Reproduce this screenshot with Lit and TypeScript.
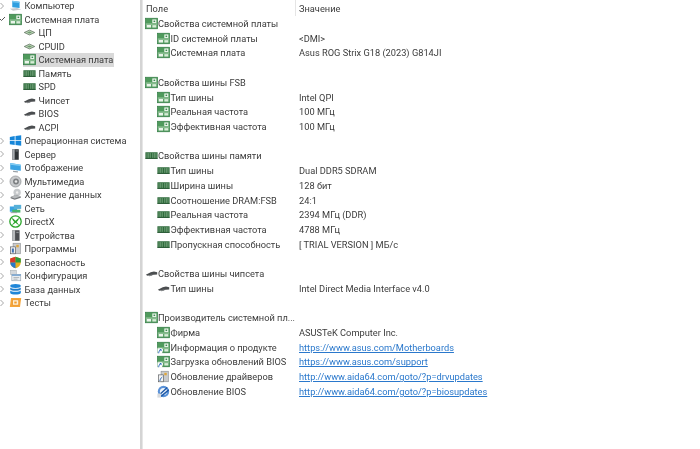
import { LitElement, html, css, svg } from "lit";
import { customElement } from "lit/decorators.js";

const board = svg`<rect x="0.5" y="1.5" width="15" height="13" fill="#4f9a5c"/><rect x="0.5" y="1.5" width="15" height="13" fill="none" stroke="#2f7a42" stroke-width=".8"/><rect x="9" y="3" width="5" height="4.5" fill="#eef5ee"/><rect x="10.5" y="4.4" width="2" height="1.8" fill="#3d8a50"/><rect x="2" y="9.8" width="5.5" height="3.2" fill="#eaf4ea"/><rect x="1" y="8.2" width="14" height="1" fill="#c4e0c4"/><rect x="9" y="10" width="5" height="3" fill="#d8ecd8"/>`;
const mem = svg`<rect x="0.5" y="4" width="15" height="8" fill="#2f6b3c"/><path d="M2.5 5v6M4.5 5v6M6.5 5v6M9.5 5v6M11.5 5v6M13.5 5v6" stroke="#8fb894" stroke-width=".8"/><rect x="0.5" y="11" width="15" height="1" fill="#1f4f2b"/>`;
const chip = svg`<path d="M1 9.5 7 6.4 11 5.6 15 6.4 15 9.2 11 9.5 6 10.2 3 10.7Z" fill="#4b4e50"/><path d="M4 10.2 9 9.2 9 10.8 5 11.3Z" fill="#85888a"/>`;
const cpu = svg`<path d="M1.5 8 8 5 14.5 8 8 11Z" fill="#b9d4b4" stroke="#5f6f60" stroke-width=".9"/><path d="M5 8 8 6.7 11 8 8 9.3Z" fill="#6f9a70"/>`;
const computer = svg`<path d="M4 2 13 3.5 13 11 4 10Z" fill="#2f9fe0"/><path d="M4 2 13 3.5 13 5 4 4Z" fill="#7cc8ef"/><path d="M1 12 10 11 15 13 5 14.5Z" fill="#c4c8cc"/>`;
const windows = svg`<path d="M1 3.6 7 2.6V7.6H1ZM8 2.5 15 1.4V7.6H8ZM1 8.5H7V13.4L1 12.5ZM8 8.5H15V14.6L8 13.5Z" fill="#1686d9"/>`;
const server = svg`<rect x="4" y="1.5" width="8" height="13" fill="#2f3336"/><rect x="4" y="1.5" width="3" height="13" fill="#a9adb1"/><rect x="8" y="3" width="3" height="1.2" fill="#7d8286"/>`;
const display = svg`<path d="M1.5 2.5 14.5 4.5V12L1.5 10.5Z" fill="#3aa3e3"/><path d="M1.5 2.5 14.5 4.5V6L1.5 4.5Z" fill="#83ccf2"/><path d="M5 12 11 12.5 11 14 5 13.5Z" fill="#9aa0a5"/>`;
const media = svg`<circle cx="8" cy="8" r="6.8" fill="#c9cbcd"/><circle cx="8" cy="8" r="6.8" fill="none" stroke="#84878a" stroke-width=".8"/><circle cx="8.6" cy="8" r="3.6" fill="#7c7f82"/><circle cx="8.6" cy="8" r="1.6" fill="#e8e8e8"/>`;
const storage = svg`<ellipse cx="10" cy="5.5" rx="4.5" ry="4.5" fill="#c6c9cb"/><circle cx="10" cy="5.5" r="1.5" fill="#eee"/><path d="M2 11 8 8.6 14.5 10.5 14.5 12 7 14.5 2 12.5Z" fill="#75787b"/><path d="M2 11 8 8.6 14.5 10.5 7 13Z" fill="#b7babc"/>`;
const net = svg`<rect x="1" y="5.5" width="9" height="6.5" fill="#3aa3e3"/><rect x="6" y="3.5" width="9" height="5" fill="#58b0d8"/><rect x="4" y="9.5" width="10" height="3.5" fill="#47b56a"/><rect x="2" y="12.5" width="8" height="1.2" fill="#9aa0a5"/>`;
const directx = svg`<circle cx="8" cy="8" r="7" fill="#fff" stroke="#2aa52a" stroke-width="1.6"/><path d="M4 3.6C6 5 7 6.2 8 7.2 9 6.2 10 5 12 3.6 13 4.4 11 7 9.4 8.6 11 10.2 12.4 12 12.2 12.8 10.6 11.6 9 10.4 8 9.6 7 10.4 5.4 11.6 3.8 12.8 3.6 12 5 10.2 6.6 8.6 5 7 3 4.4 4 3.6Z" fill="#2aa52a"/>`;
const devices = svg`<rect x="4" y="1.5" width="9" height="13" fill="#4a4d50"/><rect x="4" y="1.5" width="3.5" height="13" fill="#b7babc"/><rect x="9" y="3.5" width="3" height="1.5" fill="#8b8f92"/>`;
const programs = svg`<rect x="5" y="1.5" width="9" height="13" fill="#c9cbcd" stroke="#85888b" stroke-width=".7"/><rect x="2" y="6" width="6" height="8.5" fill="#f0f0f0" stroke="#55585b" stroke-width=".8"/><rect x="3.5" y="8" width="2.5" height="5" fill="#3f6fb0"/><rect x="9" y="3.5" width="3" height="3" fill="#e0a63a"/>`;
const shield = svg`<path d="M8 .8 14.5 3V8C14.5 11.5 11.5 14 8 15.2 4.5 14 1.5 11.5 1.5 8V3Z" fill="#e8b020"/><path d="M8 .8V8H1.5V3Z" fill="#d8392b"/><path d="M8 .8 14.5 3V8H8Z" fill="#2f9a3f"/><path d="M1.5 8H8V15.2C4.5 14 1.5 11.5 1.5 8Z" fill="#2a78c8"/>`;
const config = svg`<rect x="2" y="1.5" width="7" height="5" fill="#d4d8dc" stroke="#9ea4a8" stroke-width=".6"/><rect x="3.5" y="6.5" width="11" height="8" fill="#e9edf1" stroke="#8d99a6" stroke-width=".7"/><rect x="3.5" y="6.5" width="11" height="2" fill="#7aa6d2"/><path d="M5.5 10.5h7M5.5 12.5h5" stroke="#8a8f93" stroke-width=".7"/>`;
const db = svg`<ellipse cx="8" cy="3.6" rx="6.5" ry="2.4" fill="#1f86d8"/><path d="M1.5 5.4C2.5 7.6 13.5 7.6 14.5 5.4V8C13.5 10 2.5 10 1.5 8Z" fill="#1f7dcb"/><path d="M1.5 9.2C2.5 11.4 13.5 11.4 14.5 9.2V12.2C13.5 14.8 2.5 14.8 1.5 12.2Z" fill="#1f86d8"/>`;
const tests = svg`<path d="M2.5 2.5H15L13.5 13.5H1Z" fill="#f5a53a"/><rect x="4.6" y="4.8" width="7.4" height="6.4" fill="#fdf1d8" stroke="#e88a1c" stroke-width=".7"/><rect x="6.5" y="6.8" width="3" height="2.4" fill="#f09a2c"/>`;
const globe = svg`<rect x="0.5" y="9" width="6" height="6.5" fill="#fff"/><path d="M2 15C2.5 13 2.5 12 4.6 10.4M3 11.2 5 10.2 5 12.4" stroke="#2a66b8" stroke-width="1.2" fill="none"/>`;
const driver = svg`<rect x="5" y="1.5" width="9" height="13" fill="#c9cbcd" stroke="#85888b" stroke-width=".7"/><rect x="9" y="3.5" width="3" height="3" fill="#e0a63a"/><rect x="2" y="6" width="6" height="8.5" fill="#f4f4f4" stroke="#55585b" stroke-width=".8"/><path d="M3.5 13.5C4 11.5 4.5 10 6.5 8.6" stroke="#2a66b8" stroke-width="1.2" fill="none"/>`;
const biosUp = svg`<circle cx="8" cy="8" r="7" fill="#5a92d8"/><circle cx="8" cy="8" r="4.4" fill="#eef3fa"/><path d="M3 12 12.6 3.2M5 14 14.5 6" stroke="#1f5aa8" stroke-width="1.7"/><rect x="0.5" y="10.5" width="4.5" height="5" fill="#d7dadd"/>`;

const ic = (g: unknown, extra: unknown = null) => html`<svg class="ic" viewBox="0 0 16 16">${g}${extra}</svg>`;

type T = [unknown, string, number, number?];
const tree: T[] = [
  [computer, "Компьютер", 0],
  [board, "Системная плата", 1],
  [cpu, "ЦП", 2],
  [cpu, "CPUID", 2],
  [board, "Системная плата", 2, 1],
  [mem, "Память", 2],
  [mem, "SPD", 2],
  [chip, "Чипсет", 2],
  [chip, "BIOS", 2],
  [chip, "ACPI", 2],
  [windows, "Операционная система", 0],
  [server, "Сервер", 0],
  [display, "Отображение", 0],
  [media, "Мультимедиа", 0],
  [storage, "Хранение данных", 0],
  [net, "Сеть", 0],
  [directx, "DirectX", 0],
  [devices, "Устройства", 0],
  [programs, "Программы", 0],
  [shield, "Безопасность", 0],
  [config, "Конфигурация", 0],
  [db, "База данных", 0],
  [tests, "Тесты", 0],
];

type R = { i?: unknown; x?: unknown; f?: string; v?: string; link?: boolean; h?: boolean };
const rows: R[] = [
  { i: board, f: "Свойства системной платы", h: true },
  { i: board, f: "ID системной платы", v: "<DMI>" },
  { i: board, f: "Системная плата", v: "Asus ROG Strix G18 (2023) G814JI" },
  {},
  { i: board, f: "Свойства шины FSB", h: true },
  { i: board, f: "Тип шины", v: "Intel QPI" },
  { i: board, f: "Реальная частота", v: "100 МГц" },
  { i: board, f: "Эффективная частота", v: "100 МГц" },
  {},
  { i: mem, f: "Свойства шины памяти", h: true },
  { i: mem, f: "Тип шины", v: "Dual DDR5 SDRAM" },
  { i: mem, f: "Ширина шины", v: "128 бит" },
  { i: mem, f: "Соотношение DRAM:FSB", v: "24:1" },
  { i: mem, f: "Реальная частота", v: "2394 МГц (DDR)" },
  { i: mem, f: "Эффективная частота", v: "4788 МГц" },
  { i: mem, f: "Пропускная способность", v: "[ TRIAL VERSION ] МБ/с" },
  {},
  { i: chip, f: "Свойства шины чипсета", h: true },
  { i: chip, f: "Тип шины", v: "Intel Direct Media Interface v4.0" },
  {},
  { i: board, f: "Производитель системной пл...", h: true },
  { i: board, f: "Фирма", v: "ASUSTeK Computer Inc." },
  { i: board, x: globe, f: "Информация о продукте", v: "https://www.asus.com/Motherboards", link: true },
  { i: board, x: globe, f: "Загрузка обновлений BIOS", v: "https://www.asus.com/support", link: true },
  { i: driver, f: "Обновление драйверов", v: "http://www.aida64.com/goto/?p=drvupdates", link: true },
  { i: biosUp, f: "Обновление BIOS", v: "http://www.aida64.com/goto/?p=biosupdates", link: true },
];

@customElement("app-root")
export class AppRoot extends LitElement {
  static styles = css`
    :host { display: block; width: 700px; height: 449px; overflow: hidden; background: #fff; color: #3c3c3c;
      font-family: Roboto, "Open Sans", sans-serif; font-size: 9.25px; }
    .app { display: flex; height: 449px; filter: blur(0.3px); }
    .side { width: 140px; flex: none; margin-top: -0.9px; }
    .tr { height: 13.5px; display: flex; align-items: center; white-space: nowrap; }
    .chev { width: 8px; height: 8px; flex: none; margin-left: -2px; margin-right: 3px; }
    .chev path { fill: none; stroke: #a6a6a6; stroke-width: 1; }
    .chev.open path { stroke: #555; }
    .lv2 { padding-left: 23px; }
    .ic { width: 13px; height: 13px; flex: none; margin-right: 2.5px; }
    .sel { background: #d9d9d9; padding-right: 1px; height: 13.5px; display: flex; align-items: center; }
    .bar { width: 2px; flex: none; background: #d4d4d4; border-right: 1px solid #e6e6e6; margin-right: 1px; }
    .main { flex: 1; min-width: 0; }
    .head { display: grid; grid-template-columns: 152px 1fr; height: 16.1px; align-items: center; }
    .head span { padding-left: 2px; height: 100%; display: flex; align-items: center; }
    .head span:first-child { border-right: 1px solid #e5e5e5; }
    .head span + span { padding-left: 3px; }
    .r { display: grid; grid-template-columns: 155px 1fr; height: 14.72px; align-items: center; white-space: nowrap; }
    .f { display: flex; align-items: center; padding-left: 13px; min-width: 0; }
    .r.h .f { padding-left: 0.5px; }
    .f .ic { margin-right: 0.5px; }
    .v { min-width: 0; }
    a { color: #2a78cc; text-decoration: underline; }
  `;
  render() {
    return html`<div class="app">
      <div class="side">
        ${tree.map(([i, t, l, s]) => html`<div class="tr ${l === 2 ? "lv2" : "lv1"}">
          ${l < 2 ? html`<svg class="chev ${l === 1 ? "open" : ""}" viewBox="0 0 8 8"><path d="${l === 1 ? "M1 3l2.5 2.5L7 2" : "M2.5 1l3 3-3 3"}"/></svg>` : null}
          ${s ? html`<span class="sel">${ic(i)}${t}</span>` : html`${ic(i)}${t}`}
        </div>`)}
      </div>
      <div class="bar"></div>
      <div class="main">
        <div class="head"><span>Поле</span><span>Значение</span></div>
        <div class="rows">
          ${rows.map((r) => html`<div class="r ${r.h ? "h" : ""}">
            ${r.f ? html`<div class="f">${ic(r.i, r.x)}${r.f}</div>
            <div class="v">${r.link ? html`<a>${r.v}</a>` : r.v}</div>` : null}
          </div>`)}
        </div>
      </div>
    </div>`;
  }
}
